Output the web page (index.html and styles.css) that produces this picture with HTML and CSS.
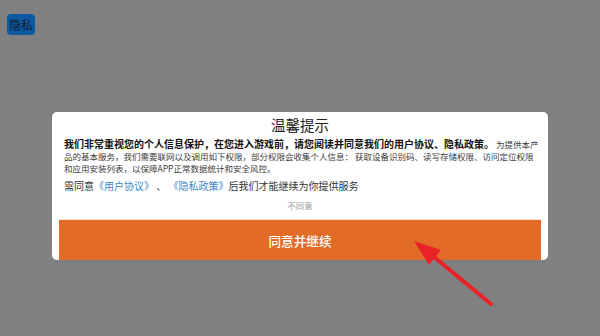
FILE: index.html
```html
<!DOCTYPE html>
<html lang="zh-CN">
<head>
<meta charset="utf-8">
<title>温馨提示</title>
<link rel="stylesheet" href="styles.css">
</head>
<body>
<div class="screen">
  <div class="badge">隐私</div>
  <div class="dialog">
    <div class="title">温馨提示</div>
    <div class="content">
      <p class="intro"><b class="lead">我们非常重视您的个人信息保护，在您进入游戏前，请您阅读并同意我们的用户协议、隐私政策。</b> <span class="small">为提供本产<br>品的基本服务，我们需要联网以及调用如下权限，部分权限会收集个人信息： 获取设备识别码、读写存储权限、访问定位权限<br>和应用安装列表，以保障APP正常数据统计和安全风控。</span></p>
      <p class="consent">需同意<a class="link">《用户协议》</a> 、 <a class="link">《隐私政策》</a>后我们才能继续为你提供服务</p>
      <div class="decline">不同意</div>
    </div>
    <button class="agree">同意并继续</button>
  </div>
  <svg class="arrow" width="600" height="336" viewBox="0 0 600 336">
    <line x1="491" y1="304" x2="428" y2="252" stroke="#ea2227" stroke-width="4" stroke-linecap="round"/>
    <polygon points="414,241 441,250 429,265" fill="#ea2227"/>
  </svg>
</div>
</body>
</html>
```
FILE: styles.css
```css
* { box-sizing: border-box; }
html, body {
  margin: 0;
  padding: 0;
  background: #808080;
}
body {
  font-family: "Noto Sans CJK SC", "Noto Sans", sans-serif;
}
.screen {
  position: relative;
  width: 600px;
  height: 336px;
  overflow: hidden;
  display: flex;
  flex-direction: column;
  align-items: flex-start;
}
.badge {
  margin: 14px 0 0 7px;
  width: 28px;
  height: 21px;
  border-radius: 4px;
  background: #0e5aa2;
  color: #131a2a;
  font-size: 12px;
  line-height: 21px;
  text-align: center;
}
.dialog {
  margin: 77px 0 0 52px;
  width: 496px;
  height: 148px;
  background: #ffffff;
  border-radius: 5px;
  padding: 0 7px;
  display: flex;
  flex-direction: column;
  overflow: hidden;
}
.title {
  flex: none;
  height: 26px;
  line-height: 26px;
  text-align: center;
  font-size: 14.5px;
  color: #222;
}
.content {
  flex: none;
  height: 81px;
  padding: 0 5px;
}
.intro {
  margin: 0;
  font-size: 8.5px;
  line-height: 12px;
  white-space: nowrap;
}
.lead {
  font-size: 10px;
  line-height: 12px;
  font-weight: 700;
  color: #111;
}
.small {
  color: #3c3c3c;
}
.consent {
  margin: 5px 0 0;
  font-size: 10px;
  line-height: 14px;
  color: #333;
  white-space: nowrap;
}
.link {
  color: #3b86c8;
}
.decline {
  margin-top: 4px;
  height: 16px;
  line-height: 16px;
  text-align: center;
  font-size: 8.3px;
  color: #9a9a9a;
}
.agree {
  flex: none;
  height: 41px;
  margin: 0;
  border: 0;
  border-top: 1px solid #f6d9ca;
  background: #e26c27;
  color: #ffffff;
  font-family: inherit;
  font-size: 12.6px;
  font-weight: 500;
  padding: 0;
}
.arrow {
  position: absolute;
  left: 0;
  top: 0;
  pointer-events: none;
}
```
